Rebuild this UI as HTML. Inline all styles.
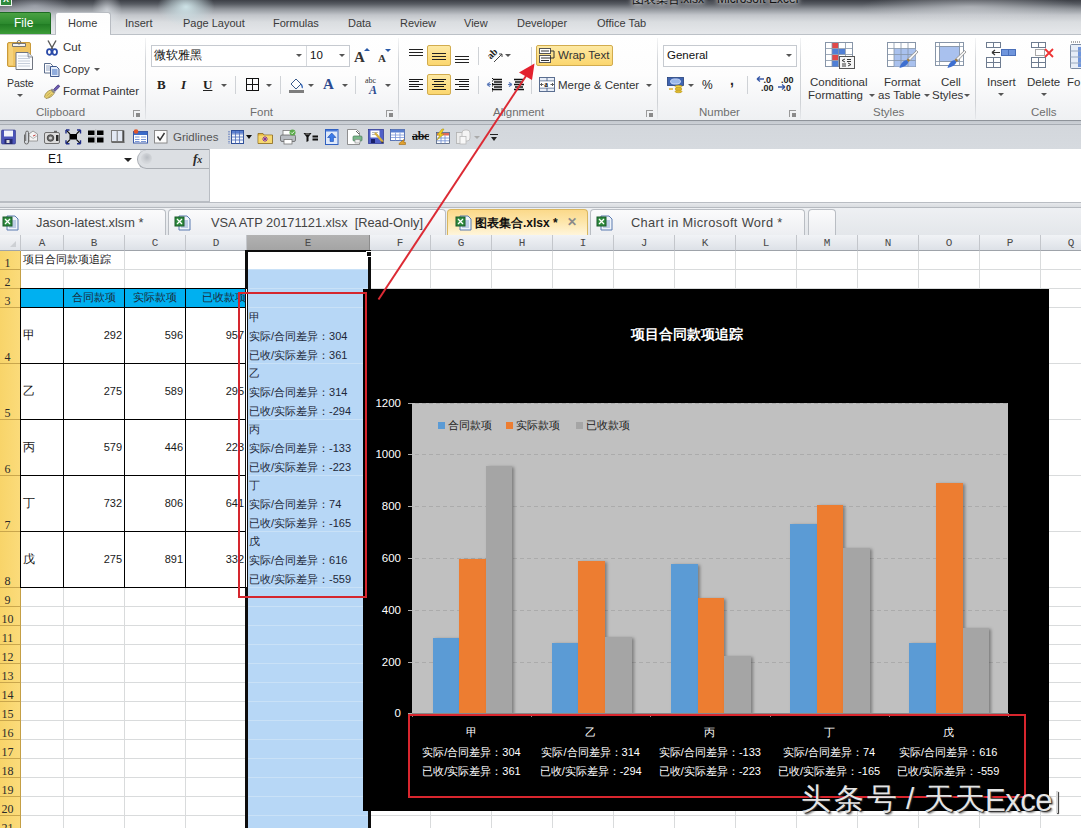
<!DOCTYPE html>
<html><head><meta charset="utf-8"><style>
*{box-sizing:border-box}
html,body{margin:0;padding:0}
body{width:1081px;height:828px;overflow:hidden;position:relative;background:#fff;font-family:"Liberation Sans",sans-serif;color:#222}
.a{position:absolute}
.t{position:absolute;white-space:nowrap;line-height:1}

.rt{position:absolute;top:16px;font-size:11px;color:#3a3a3a;white-space:nowrap;line-height:14px}
.gl{position:absolute;top:106px;font-size:11.5px;color:#6e6e6e;white-space:nowrap;line-height:13px}
.sep{position:absolute;top:38px;width:1px;height:81px;background:linear-gradient(#f4f5f6,#d0d3d7 30%,#cfd2d6 80%,#e6e8eb)}
.rx{position:absolute;font-size:11.5px;color:#333;white-space:nowrap;line-height:13px}
.dd{position:absolute;width:0;height:0;border-left:3px solid transparent;border-right:3px solid transparent;border-top:3px solid #555}
.lnch{position:absolute;top:110px;width:7px;height:7px;border-left:1px solid #9a9a9a;border-top:1px solid #9a9a9a}
.qi{position:absolute;top:128px;width:16px;height:16px}
.gs{position:absolute;width:1px;background:#cfd2d6}
svg{position:absolute;overflow:visible}

.ch{position:absolute;top:235px;height:16px;background:linear-gradient(#f1f3f6,#dde1e7);border-right:1px solid #c3c6cb;border-bottom:1px solid #9ea3aa;font-family:"Liberation Mono",monospace;font-size:11px;color:#4a4a4a;text-align:center;line-height:17px}
.rh{position:absolute;left:0;width:21px;background:linear-gradient(90deg,#f8d469,#fbdb7a);border-bottom:1px solid #c9a64c;border-right:1px solid #c49f45;font-family:"Liberation Serif",serif;font-size:12px;color:#2a2a2a;text-align:center;line-height:13px;padding-right:5px}
.hl{position:absolute;height:1px;background:#d9dbdc}
.vl{position:absolute;width:1px;background:#d9dbdc}
.cn{position:absolute;font-size:11px;color:#1a1a1a;white-space:nowrap;line-height:1}

.yl{position:absolute;width:40px;text-align:right;font-size:11.5px;color:#fff;line-height:12px;white-space:nowrap}
.xl{position:absolute;width:119px;text-align:center;font-size:11px;color:#fff;line-height:12px;white-space:nowrap}
.lg{position:absolute;top:419px;font-size:11px;color:#222;white-space:nowrap;line-height:12px}
</style></head><body>
<div class="a" style="left:0;top:0;width:1081px;height:35px;background:linear-gradient(#3c3f46 0px,#575b62 4px,#8f9399 9px,#c2c5ca 15px,#dadde0 22px,#e6e8eb 34px)"></div>
<div class="a" style="left:158px;top:-12px;width:56px;height:38px;background:radial-gradient(ellipse at center,rgba(210,232,236,.95),rgba(200,220,225,.5) 40%,rgba(200,210,220,0) 72%)"></div>
<div class="a" style="left:92px;top:-10px;width:30px;height:40px;background:radial-gradient(ellipse at center,rgba(235,240,245,.6),rgba(200,210,220,0) 70%)"></div>
<div class="a" style="left:0px;top:-6px;width:70px;height:24px;background:radial-gradient(ellipse at center,rgba(210,215,225,.45),rgba(200,210,220,0) 70%)"></div>
<div class="a" style="left:860px;top:-8px;width:220px;height:30px;background:radial-gradient(ellipse at center,rgba(225,228,232,.5),rgba(200,210,220,0) 70%)"></div>
<div class="a" style="left:0;top:-4px;width:12px;height:10px;background:#2f8a3a;border:1px solid #eef4ee"></div>
<div class="t" style="left:3px;top:-5px;font-size:9px;color:#fff;font-weight:bold">X</div>
<div class="t" style="left:632px;top:-7px;font-size:12px;color:#111;text-shadow:0 0 6px #fff,0 0 4px #fff">图表集合.xlsx</div>
<div class="t" style="left:717px;top:-7px;font-size:12px;color:#111;text-shadow:0 0 6px #fff,0 0 4px #fff">Microsoft Excel</div>
<div class="t" style="left:707px;top:-7px;font-size:12px;color:#111;text-shadow:0 0 6px #fff">-</div>
<div class="a" style="left:0;top:12px;width:51px;height:23px;background:linear-gradient(#4aa243,#2c8a2e 50%,#1f7a22 51%,#3c9c38);border:1px solid #1d6b21;border-left:none;border-radius:0 2px 0 0"></div>
<div class="t" style="left:14px;top:16px;font-size:12px;color:#fff;line-height:14px">File</div>
<div class="a" style="left:55px;top:12px;width:56px;height:24px;background:linear-gradient(#fdfdfd,#ffffff);border:1px solid #b8bcc2;border-bottom:none;border-radius:3px 3px 0 0"></div>
<div class="rt" style="left:68px;color:#3b3b3b">Home</div>
<div class="rt" style="left:125px">Insert</div>
<div class="rt" style="left:183px">Page Layout</div>
<div class="rt" style="left:273px">Formulas</div>
<div class="rt" style="left:348px">Data</div>
<div class="rt" style="left:400px">Review</div>
<div class="rt" style="left:464px">View</div>
<div class="rt" style="left:517px">Developer</div>
<div class="rt" style="left:597px">Office Tab</div>
<div class="a" style="left:0;top:34px;width:1081px;height:86px;background:linear-gradient(#ffffff 0px,#fdfdfd 40px,#f3f4f6 70px,#eef0f2 86px);border-top:1px solid #bcc1c7"></div>
<div class="a" style="left:56px;top:34px;width:54px;height:2px;background:#fff"></div>
<div class="sep" style="left:145px"></div>
<div class="sep" style="left:398px"></div>
<div class="sep" style="left:657px"></div>
<div class="sep" style="left:800px"></div>
<div class="sep" style="left:975px"></div>
<div class="gl" style="left:36px">Clipboard</div>
<div class="gl" style="left:250px">Font</div>
<div class="gl" style="left:493px">Alignment</div>
<div class="gl" style="left:699px">Number</div>
<div class="gl" style="left:873px">Styles</div>
<div class="gl" style="left:1031px">Cells</div>
<div class="lnch" style="left:133px"></div><div class="a" style="left:136px;top:113px;width:4px;height:4px;background:#8a8a8a"></div>
<div class="lnch" style="left:386px"></div><div class="a" style="left:389px;top:113px;width:4px;height:4px;background:#8a8a8a"></div>
<div class="lnch" style="left:646px"></div><div class="a" style="left:649px;top:113px;width:4px;height:4px;background:#8a8a8a"></div>
<div class="lnch" style="left:789px"></div><div class="a" style="left:792px;top:113px;width:4px;height:4px;background:#8a8a8a"></div>
<svg style="left:7px;top:40px" width="27" height="31" viewBox="0 0 27 31"><rect x=".5" y="2.5" width="23" height="24" rx="1.5" fill="#f0c462" stroke="#c99a3a"/><rect x="2" y="4" width="4" height="21" fill="#f6d27a"/><path d="M5.5 3.5h13v3h-13z" fill="#f4f4f4" stroke="#6a6a6a" stroke-width=".9"/><circle cx="12" cy="2.3" r="1.8" fill="none" stroke="#6a6a6a" stroke-width=".9"/><path d="M9 12.5h12l4.5 4.5v12.5H9z" fill="#fbfcfe" stroke="#707580"/><path d="M21 12.5v4.5h4.5" fill="#dde3ea" stroke="#707580" stroke-width=".8"/><path d="M11 16h9M11 18.5h12M11 21h12M11 23.5h12M11 26h12" stroke="#b9c2d0" stroke-width=".8"/></svg>
<div class="rx" style="left:7px;top:77px;font-size:10.6px;letter-spacing:-0.1px">Paste</div>
<div class="dd" style="left:17px;top:94px"></div>
<svg style="left:46px;top:40px" width="12" height="16" viewBox="0 0 12 16"><path d="M2 .5l5 9M10 .5L5 9.5" stroke="#5a5a5a" stroke-width="1.4"/><ellipse cx="3.3" cy="12" rx="2.3" ry="2.8" fill="#fff" stroke="#2a4aa8" stroke-width="1.8"/><ellipse cx="8.7" cy="12" rx="2.3" ry="2.8" fill="#fff" stroke="#2a4aa8" stroke-width="1.8"/></svg>
<div class="rx" style="left:63px;top:41px">Cut</div>
<svg style="left:44px;top:63px" width="16" height="14" viewBox="0 0 16 14"><path d="M.5 .5h6l2 2v7.5H.5z" fill="#fdfdfe" stroke="#4a5d80" stroke-width=".9"/><path d="M2 3h4M2 5h5M2 7h5" stroke="#7a90b8" stroke-width=".8"/><path d="M6.5 3.5h6l2.5 2.5v7.5H6.5z" fill="#e6eefa" stroke="#2a4680" stroke-width=".9"/><path d="M8 7h5.5M8 9h5.5M8 11h5.5" stroke="#3a6ac0" stroke-width="1"/></svg>
<div class="rx" style="left:63px;top:63px">Copy</div>
<div class="dd" style="left:94px;top:68px"></div>
<svg style="left:44px;top:84px" width="16" height="15" viewBox="0 0 16 15"><path d="M9.5 5.5l4-4.2a1.3 1.3 0 0 1 1.8 1.8l-4.2 4z" fill="#6a5ab0" stroke="#3a2a70" stroke-width=".7"/><path d="M8 4.5l3.5 3.5-1.5 1.5-3.5-3.5z" fill="#8a8a8a"/><path d="M6.5 6l3.5 3.5c-1.5 2.5-4 4.5-8 5-.5-.5-.8-.8-1.5-1.5.5-4 3.5-6 6-7z" fill="#e8d070" stroke="#8a7a3a" stroke-width=".7"/><path d="M2.5 12l4-3.5M4 13.5l4-3.5" stroke="#a89040" stroke-width=".6"/></svg>
<div class="rx" style="left:63px;top:85px">Format Painter</div>
<div class="a" style="left:151px;top:45px;width:199px;height:22px;background:#fff;border:1px solid #c6cad0"></div>
<div class="a" style="left:306px;top:46px;width:1px;height:20px;background:#d5d8dc"></div>
<div class="t" style="left:154px;top:49px;font-size:12px;color:#111">微软雅黑</div>
<div class="dd" style="left:296px;top:54px"></div>
<div class="t" style="left:310px;top:50px;font-size:11.5px;color:#111">10</div>
<div class="dd" style="left:339px;top:54px"></div>
<div class="t" style="left:354px;top:50px;font-size:15px;color:#333;font-family:'Liberation Serif',serif;font-weight:bold">A</div>
<div class="t" style="left:378px;top:53px;font-size:11px;color:#333;font-family:'Liberation Serif',serif;font-weight:bold">A</div>
<div class="a" style="left:364px;top:48px;width:0;height:0;border-left:3px solid transparent;border-right:3px solid transparent;border-bottom:3px solid #2a5aa8"></div>
<div class="a" style="left:385px;top:49px;width:0;height:0;border-left:3px solid transparent;border-right:3px solid transparent;border-top:3px solid #2a5aa8"></div>
<div class="t" style="left:157px;top:78px;font-size:13px;color:#222;font-family:'Liberation Serif',serif;font-weight:bold">B</div>
<div class="t" style="left:181px;top:78px;font-size:13px;color:#222;font-family:'Liberation Serif',serif;font-style:italic;font-weight:bold">I</div>
<div class="t" style="left:203px;top:78px;font-size:13px;color:#222;font-family:'Liberation Serif',serif;font-weight:bold;text-decoration:underline">U</div>
<div class="dd" style="left:221px;top:84px"></div>
<div class="gs" style="left:235px;top:76px;height:18px"></div>
<svg style="left:246px;top:78px" width="13" height="13" viewBox="0 0 13 13"><rect x=".5" y=".5" width="12" height="12" fill="none" stroke="#111"/><path d="M6.5 0v13M0 6.5h13" stroke="#111"/></svg>
<div class="dd" style="left:266px;top:84px"></div>
<div class="gs" style="left:280px;top:76px;height:18px"></div>
<svg style="left:288px;top:76px" width="17" height="17" viewBox="0 0 17 17"><path d="M3 8l5-5 5 5-5 5z" fill="#fff" stroke="#3a5a8a"/><path d="M13 8c1 2 2 3 1 4" stroke="#3a6ab8" stroke-width="1.5" fill="none"/><rect x="1" y="14" width="15" height="3" fill="#7d7d7d"/></svg>
<div class="dd" style="left:308px;top:84px"></div>
<div class="t" style="left:323px;top:77px;font-size:15px;color:#2b4b8f;font-family:'Liberation Serif',serif;font-weight:bold">A</div>
<div class="dd" style="left:342px;top:84px"></div>
<div class="gs" style="left:355px;top:76px;height:18px"></div>
<div class="t" style="left:365px;top:77px;font-size:8px;color:#333;font-family:'Liberation Serif',serif">abc</div>
<div class="t" style="left:369px;top:84px;font-size:12px;color:#2b4b8f;font-family:'Liberation Serif',serif;font-style:italic;font-weight:bold">A</div>
<div class="dd" style="left:385px;top:84px"></div>
<div class="a" style="left:427px;top:45px;width:24px;height:21px;background:linear-gradient(#fde9a4,#fbd66e);border:1px solid #d2ac4e;border-radius:2px"></div>
<div class="a" style="left:427px;top:74px;width:24px;height:21px;background:linear-gradient(#fde9a4,#fbd66e);border:1px solid #d2ac4e;border-radius:2px"></div>
<div class="a" style="left:409px;top:49px;width:14px;height:1px;background:#222"></div><div class="a" style="left:409px;top:52px;width:14px;height:1px;background:#222"></div><div class="a" style="left:409px;top:55px;width:14px;height:1px;background:#222"></div>
<div class="a" style="left:432px;top:53px;width:14px;height:1px;background:#222"></div><div class="a" style="left:432px;top:56px;width:14px;height:1px;background:#222"></div><div class="a" style="left:432px;top:59px;width:14px;height:1px;background:#222"></div>
<div class="a" style="left:455px;top:56px;width:14px;height:1px;background:#222"></div><div class="a" style="left:455px;top:59px;width:14px;height:1px;background:#222"></div><div class="a" style="left:455px;top:62px;width:14px;height:1px;background:#222"></div>
<div class="a" style="left:409px;top:79px;width:14px;height:1px;background:#1a1a1a"></div>
<div class="a" style="left:432px;top:79px;width:14px;height:1px;background:#1a1a1a"></div>
<div class="a" style="left:455px;top:79px;width:14px;height:1px;background:#1a1a1a"></div>
<div class="a" style="left:409px;top:81px;width:10px;height:1px;background:#1a1a1a"></div>
<div class="a" style="left:434px;top:81px;width:10px;height:1px;background:#1a1a1a"></div>
<div class="a" style="left:459px;top:81px;width:10px;height:1px;background:#1a1a1a"></div>
<div class="a" style="left:409px;top:84px;width:14px;height:1px;background:#1a1a1a"></div>
<div class="a" style="left:432px;top:84px;width:14px;height:1px;background:#1a1a1a"></div>
<div class="a" style="left:455px;top:84px;width:14px;height:1px;background:#1a1a1a"></div>
<div class="a" style="left:409px;top:86px;width:10px;height:1px;background:#1a1a1a"></div>
<div class="a" style="left:434px;top:86px;width:10px;height:1px;background:#1a1a1a"></div>
<div class="a" style="left:459px;top:86px;width:10px;height:1px;background:#1a1a1a"></div>
<div class="a" style="left:409px;top:89px;width:14px;height:1px;background:#1a1a1a"></div>
<div class="a" style="left:432px;top:89px;width:14px;height:1px;background:#1a1a1a"></div>
<div class="a" style="left:455px;top:89px;width:14px;height:1px;background:#1a1a1a"></div>
<div class="gs" style="left:478px;top:47px;height:18px"></div><div class="gs" style="left:478px;top:76px;height:18px"></div>
<div class="t" style="left:487px;top:49px;font-size:10px;color:#222;font-family:'Liberation Serif',serif;font-weight:bold;transform:rotate(-45deg)">ab</div>
<svg style="left:493px;top:53px" width="10" height="10" viewBox="0 0 10 10"><path d="M1 9L9 1M6 1h3v3" stroke="#444" fill="none"/></svg>
<div class="dd" style="left:505px;top:54px"></div>
<svg style="left:487px;top:78px" width="40" height="14" viewBox="0 0 40 14"><path d="M0 6.5h4M0 6.5l3-2M0 6.5l3 2" stroke="#5a78b8" stroke-width="1.2" fill="none"/><path d="M6 1.5h9M7 4h8M5 6.5h10M7 9h8M5 11.5h10" stroke="#111" stroke-width="1.3"/><path d="M5.5 0v14" stroke="#111" stroke-dasharray="1 1.5"/><path d="M21 6.5h4M25 6.5l-3-2M25 6.5l-3 2" stroke="#5a78b8" stroke-width="1.2" fill="none"/><path d="M27 1.5h9M28 4h8M27 6.5h10M28 9h8M27 11.5h10" stroke="#111" stroke-width="1.3"/></svg>
<div class="gs" style="left:531px;top:47px;height:18px"></div><div class="gs" style="left:531px;top:76px;height:18px"></div>
<div class="a" style="left:536px;top:45px;width:77px;height:21px;background:linear-gradient(#fde9a4,#fbd66e);border:1px solid #d2ac4e;border-radius:2px"></div>
<svg style="left:539px;top:48px" width="17" height="16" viewBox="0 0 17 16"><rect x=".5" y=".5" width="11" height="5" fill="#fff" stroke="#555"/><path d="M2 3h8" stroke="#333"/><rect x=".5" y="7.5" width="11" height="7" fill="#fff" stroke="#555"/><path d="M2 10h8M2 12.5h8" stroke="#333"/><path d="M11 3h4v7h-3" stroke="#333" fill="none"/><path d="M12 8v4l-2-2z" fill="#333"/></svg>
<div class="rx" style="left:558px;top:49px;color:#333">Wrap Text</div>
<svg style="left:539px;top:77px" width="17" height="15" viewBox="0 0 17 15"><rect x=".5" y=".5" width="15" height="14" fill="#e8eef8" stroke="#5a6e90"/><path d="M.5 4h15M.5 11h15M8 .5v3.5M8 11v3.5" stroke="#5a6e90"/><rect x="1" y="4.5" width="14" height="6" fill="#fff"/><path d="M1.5 7.5h3M1.5 7.5l1.5-1.5M1.5 7.5l1.5 1.5M14.5 7.5h-3M14.5 7.5l-1.5-1.5M14.5 7.5l-1.5 1.5" stroke="#333" stroke-width=".8" fill="none"/><text x="5.3" y="10" font-size="7.5" font-weight="bold" font-family="Liberation Serif" fill="#111">a</text></svg>
<div class="rx" style="left:558px;top:79px">Merge &amp; Center</div>
<div class="dd" style="left:646px;top:84px"></div>
<div class="a" style="left:663px;top:45px;width:134px;height:22px;background:#fff;border:1px solid #c6cad0"></div>
<div class="t" style="left:667px;top:50px;font-size:11.5px;color:#111">General</div>
<div class="dd" style="left:786px;top:54px"></div>
<svg style="left:667px;top:77px" width="17" height="16" viewBox="0 0 17 16"><rect x=".5" y=".5" width="16" height="8" fill="#3f64b0" stroke="#23407a" stroke-width=".8"/><ellipse cx="8.5" cy="4.5" rx="5" ry="2.6" fill="#9ab8ea" stroke="#dfe8ff" stroke-width=".8"/><ellipse cx="11.5" cy="9.5" rx="3.5" ry="1.3" fill="#f0cf40" stroke="#a88a10" stroke-width=".5"/><ellipse cx="11.5" cy="12" rx="3.5" ry="1.3" fill="#e8c030" stroke="#a88a10" stroke-width=".5"/><ellipse cx="11.5" cy="14.5" rx="3.5" ry="1.3" fill="#e0b828" stroke="#a88a10" stroke-width=".5"/><path d="M2 12h4" stroke="#e0b030" stroke-width="1.5"/></svg>
<div class="dd" style="left:688px;top:84px"></div>
<div class="t" style="left:702px;top:79px;font-size:12px;color:#222">%</div>
<div class="t" style="left:730px;top:73px;font-size:14px;color:#222;font-weight:bold">,</div>
<div class="gs" style="left:747px;top:76px;height:18px"></div>
<div class="t" style="left:761px;top:76px;font-size:9px;color:#222;font-weight:bold;line-height:8px">&nbsp;.0<br>.00</div>
<svg style="left:756px;top:76px" width="8" height="6" viewBox="0 0 8 6"><path d="M1 3h7M1 3l3-2.5M1 3l3 2.5" stroke="#3a5aa8" stroke-width="1.3" fill="none"/></svg>
<div class="t" style="left:781px;top:76px;font-size:9px;color:#222;font-weight:bold;line-height:8px">.00<br>&nbsp;.0</div>
<svg style="left:778px;top:84px" width="8" height="6" viewBox="0 0 8 6"><path d="M0 3h7M7 3L4 .5M7 3L4 5.5" stroke="#3a5aa8" stroke-width="1.3" fill="none"/></svg>
<svg style="left:825px;top:42px" width="31" height="28" viewBox="0 0 31 28"><rect x=".5" y=".5" width="27" height="24" fill="#fff" stroke="#8795a8"/><rect x="7" y="1" width="6.5" height="5.5" fill="#e04848"/><rect x="7" y="7" width="13" height="5.5" fill="#4f7fd6"/><rect x="7" y="13" width="6.5" height="5.5" fill="#e04848"/><rect x="7" y="19" width="6.5" height="5.5" fill="#4f7fd6"/><path d="M7 .5v24M13.5 .5v24M20.5 .5v24M.5 6.5h27M.5 12.5h27M.5 18.5h27" stroke="#8795a8" stroke-width=".8"/><rect x="14.5" y="14.5" width="15" height="12" fill="#f6f6f6" stroke="#555"/><path d="M20 17l-3 1.5 3 1.5M22 17.5h4M22 19.5h4M17 22h4M17 24h4M23 21l3 1.5-3 1.5" stroke="#222" fill="none" stroke-width=".9"/></svg>
<svg style="left:887px;top:42px" width="31" height="28" viewBox="0 0 31 28"><rect x=".5" y=".5" width="28" height="24" fill="#fff" stroke="#8795a8"/><rect x="7" y="6.5" width="21.5" height="18" fill="#a9c1ee"/><path d="M7 .5v24M14 .5v24M21 .5v24M.5 6.5h28M.5 12.5h28M.5 18.5h28" stroke="#8795a8" stroke-width=".8"/><g transform="translate(8.5,7)"><path d="M21 1.5l1.5 1.5-8 8.5-2-2z" fill="#f4f4f4" stroke="#8a8a8a" stroke-width=".8"/><path d="M12.5 9.5l2 2-1.5 1.5-2-2z" fill="#a07a3a"/><path d="M11 11l2 2c-1 3-4 5-9 6 1-4 3-7 7-8z" fill="#3d6fd0"/></g></svg>
<svg style="left:935px;top:42px" width="31" height="28" viewBox="0 0 31 28"><rect x=".5" y=".5" width="28" height="23" fill="#fff" stroke="#8795a8"/><rect x="4.5" y="4.5" width="20" height="15" fill="#a9c1ee" stroke="#8795a8" stroke-width=".8"/><path d="M4.5 .5v23M24.5 .5v23M.5 4.5h28M.5 19.5h28" stroke="#8795a8" stroke-width=".8"/><g transform="translate(8.5,7)"><path d="M21 1.5l1.5 1.5-8 8.5-2-2z" fill="#f4f4f4" stroke="#8a8a8a" stroke-width=".8"/><path d="M12.5 9.5l2 2-1.5 1.5-2-2z" fill="#a07a3a"/><path d="M11 11l2 2c-1 3-4 5-9 6 1-4 3-7 7-8z" fill="#3d6fd0"/></g></svg>
<div class="rx" style="left:810px;top:76px">Conditional</div>
<div class="rx" style="left:808px;top:89px">Formatting</div><div class="dd" style="left:869px;top:94px"></div>
<div class="rx" style="left:884px;top:76px">Format</div>
<div class="rx" style="left:878px;top:89px">as Table</div><div class="dd" style="left:924px;top:94px"></div>
<div class="rx" style="left:941px;top:76px">Cell</div>
<div class="rx" style="left:932px;top:89px">Styles</div><div class="dd" style="left:964px;top:94px"></div>
<svg style="left:986px;top:42px" width="31" height="27" viewBox="0 0 31 27"><g fill="#fff" stroke="#6e7c90"><rect x=".5" y=".5" width="14" height="5"/><path d="M7.5 .5v5"/><rect x=".5" y="15.5" width="14" height="10"/><path d="M7.5 15.5v10M.5 20.5h14"/></g><rect x="15.5" y="7.5" width="14" height="6" fill="#6f95dc" stroke="#4a6fb8"/><path d="M22.5 7.5v6" stroke="#4a6fb8"/><path d="M6 10.5h8M6 10.5l3-2.5M6 10.5l3 2.5" stroke="#333" stroke-width="1.2" fill="none"/></svg>
<svg style="left:1031px;top:42px" width="25" height="27" viewBox="0 0 25 27"><g fill="#fff" stroke="#6e7c90"><rect x=".5" y=".5" width="14" height="5"/><path d="M7.5 .5v5"/><rect x=".5" y="15.5" width="14" height="10"/><path d="M7.5 15.5v10M.5 20.5h14"/></g><rect x="4.5" y="7.5" width="9" height="6" fill="none" stroke="#555" stroke-dasharray="1 1"/><path d="M14 7l8 8M22 7l-8 8" stroke="#e33" stroke-width="1.8"/></svg>
<svg style="left:1070px;top:41px" width="12" height="29" viewBox="0 0 12 29"><rect x=".5" y="3.5" width="12" height="24" rx="1" fill="#e6edf7" stroke="#7b8ba3"/><rect x="8" y="6" width="4" height="20" fill="#6f95dc"/><path d="M.5 10h12M.5 16h12M.5 22h12" stroke="#9aaac0"/><path d="M1 1h10" stroke="#555" stroke-dasharray="1 1"/></svg>
<div class="rx" style="left:987px;top:76px">Insert</div><div class="dd" style="left:998px;top:93px"></div>
<div class="rx" style="left:1027px;top:76px">Delete</div><div class="dd" style="left:1041px;top:93px"></div>
<div class="rx" style="left:1067px;top:76px">Fo</div>
<div class="a" style="left:0;top:120px;width:1081px;height:29px;background:linear-gradient(#8e939a 0px,#8e939a 1px,#c3c8ce 1px,#cdd1d7 4px,#a7acb3 4px,#a7acb3 5px,#d3d7dc 5px,#d6dadf 100%)"></div>
<svg style="left:1px;top:129px" width="17" height="16" viewBox="0 0 17 16"><rect x=".5" y="1" width="14" height="14" rx="1" fill="#4b54b8" stroke="#2e3488" stroke-width=".6"/><rect x="3" y="1.5" width="9" height="6" fill="#f2f4fa"/><rect x="3.5" y="10" width="8" height="5" fill="#262a70"/><rect x="5.5" y="11" width="3" height="3" fill="#ddd"/></svg>
<svg style="left:22px;top:129px" width="17" height="16" viewBox="0 0 17 16"><path d="M7 5l4-3 4.5 3v7H7z" fill="#f4f4f4" stroke="#888" stroke-width=".8"/><path d="M7 6.5l4.2 3L15.5 6.5" stroke="#999" fill="none" stroke-width=".7"/><path d="M11 7l2.5-1" stroke="#c03030" stroke-width=".9"/><path d="M2.5 5.5v7.5a2 2 0 0 0 4 0V3.5a1.4 1.4 0 0 0-2.8 0V12" stroke="#6a6a6a" fill="none" stroke-width="1"/></svg>
<svg style="left:44px;top:129px" width="17" height="16" viewBox="0 0 17 16"><rect x=".5" y="3.5" width="15" height="11" rx="1.5" fill="#dcdcdc" stroke="#707070"/><circle cx="6.5" cy="9" r="3.3" fill="#6a6a6a" stroke="#3a3a3a" stroke-width=".8"/><circle cx="6.5" cy="9" r="1.6" fill="#cfcfcf"/><rect x="12" y="6" width="2.5" height="6" fill="#2a2a2a"/><rect x="10" y="1.8" width="3" height="2" fill="#666"/></svg>
<svg style="left:65px;top:129px" width="17" height="16" viewBox="0 0 17 16"><rect x="4.5" y="5" width="7.5" height="5.5" fill="#000"/><path d="M1.2 1.2l3.8 3.8M15.3 1.2l-3.8 3.8M1.2 14.5l3.8-3.8M15.3 14.5l-3.8-3.8" stroke="#111" stroke-width="1.2"/><path d="M1 1h3.5M1 1v3.5M15.5 1H12M15.5 1v3.5M1 14.7h3.5M1 14.7v-3.5M15.5 14.7H12M15.5 14.7v-3.5" stroke="#1c2a86" stroke-width="1.4"/></svg>
<svg style="left:88px;top:129px" width="17" height="16" viewBox="0 0 17 16"><rect x="0" y="1.5" width="6.5" height="4.5" fill="#000"/><rect x="9" y="1.5" width="6.5" height="4.5" fill="#000"/><rect x="0" y="8.5" width="6.5" height="5" fill="#000"/><rect x="9" y="8.5" width="6.5" height="5" fill="#000"/><path d="M7.75 0v15M0 7.3h15.5" stroke="#aaa" stroke-width=".6"/></svg>
<svg style="left:111px;top:129px" width="17" height="16" viewBox="0 0 17 16"><rect x=".5" y="1.5" width="11.5" height="11" fill="#e3e9f4" stroke="#7a7a7a"/><path d="M6.2 1.5v11" stroke="#7a7a7a"/><rect x="11.5" y="1.5" width="1.8" height="12.5" fill="#4a4a4a"/><rect x=".5" y="12.5" width="12.8" height="1.5" fill="#6a6a6a"/></svg>
<svg style="left:133px;top:129px" width="17" height="16" viewBox="0 0 17 16"><rect x=".5" y="2.5" width="14" height="11.5" fill="#fff" stroke="#3a5aa8"/><rect x="1" y="3" width="13" height="3" fill="#3a6ac8"/><path d="M2 8h4.5M8 8h5M2 10.5h4.5M8 10.5h5M2 12.5h4.5M8 12.5h5" stroke="#6a8ad0" stroke-width=".9"/><circle cx="3" cy="2.5" r="2.3" fill="#e0552a"/></svg>
<svg style="left:154px;top:129px" width="17" height="16" viewBox="0 0 17 16"><rect x=".5" y="1.5" width="12.5" height="12.5" fill="#fbfbfb" stroke="#8a8a8a"/><path d="M3.5 7.5l2.5 3.5 4.5-7" stroke="#333" fill="none" stroke-width="1.4"/></svg>
<div class="t" style="left:173px;top:132px;font-size:11.5px;color:#555">Gridlines</div>
<svg style="left:228px;top:129px" width="17" height="16" viewBox="0 0 17 16"><rect x="3.5" y="1.5" width="12" height="13" fill="#f4f7fc" stroke="#2f4f98"/><rect x="4" y="2" width="11" height="2.5" fill="#5a7fd0"/><path d="M3.5 5h12M3.5 8h12M3.5 11h12M7.5 2v12.5M11.5 2v12.5" stroke="#4a6ab8" stroke-width=".8"/><path d="M1 2v13" stroke="#4a6ab8" stroke-dasharray="1.5 1"/></svg>
<svg style="left:257px;top:129px" width="17" height="16" viewBox="0 0 17 16"><path d="M1 4.5h5l1 1.5h8.5v8.5H1z" fill="#e6b840" stroke="#8a6a20" stroke-width=".8"/><rect x="1.5" y="6.5" width="13.5" height="7.5" fill="#f6d870"/><path d="M8 7v6M5 10h6M6 8l4 4M10 8l-4 4" stroke="#7a2aa8" stroke-width=".9"/></svg>
<svg style="left:280px;top:129px" width="17" height="16" viewBox="0 0 17 16"><rect x="3" y="1.5" width="8" height="5" fill="#fff" stroke="#777" stroke-width=".8"/><rect x=".5" y="6" width="15" height="6.5" rx="1.5" fill="#b8bcc2" stroke="#666" stroke-width=".8"/><rect x="4" y="10.5" width="8" height="4.5" fill="#fff" stroke="#777" stroke-width=".8"/><circle cx="12.5" cy="3.5" r="3" fill="#5aaa4a"/><path d="M11 3.5l1.2 1.2 2-2.2" stroke="#fff" fill="none" stroke-width=".9"/></svg>
<svg style="left:303px;top:129px" width="17" height="16" viewBox="0 0 17 16"><path d="M.5 4h8l-3 4v4l-2 1V8z" fill="#111"/><path d="M2.5 5h4" stroke="#fff" stroke-width=".6"/><path d="M9.5 7.5h5.5M9.5 10.5h5.5" stroke="#111" stroke-width="1.8"/></svg>
<svg style="left:325px;top:129px" width="17" height="16" viewBox="0 0 17 16"><rect x=".5" y=".5" width="12.5" height="15" fill="#dfe9fa" stroke="#3060c0"/><rect x="1" y="1" width="11.5" height="1.5" fill="#4a7ad8"/><path d="M6.75 4l-4.2 4.5h2.5v4h3.4v-4h2.5z" fill="#3a7ae8" stroke="#1a4ab0" stroke-width=".6"/></svg>
<svg style="left:347px;top:129px" width="17" height="16" viewBox="0 0 17 16"><path d="M.5 .5h9l3 3v12H.5z" fill="#fff" stroke="#777" stroke-width=".8"/><rect x="6" y="7" width="9" height="5" rx="1" fill="#7ab88a" stroke="#4a7a5a" stroke-width=".7"/><rect x="8" y="10.5" width="5" height="3.5" fill="#eee" stroke="#888" stroke-width=".6"/><path d="M9 2l3 3" stroke="#333" stroke-width=".8"/></svg>
<svg style="left:368px;top:129px" width="17" height="16" viewBox="0 0 17 16"><rect x=".5" y=".5" width="15" height="14" fill="#5060c8" stroke="#2a3490" stroke-width=".7"/><rect x="2.5" y="1.5" width="9" height="7" fill="#fff"/><path d="M4 3.5h6M4 5.5h6" stroke="#999" stroke-width=".7"/><rect x="3" y="10" width="4" height="4" fill="#1a206a"/><path d="M7 4l8 9" stroke="#d8b040" stroke-width="2.2"/><path d="M14 12l1.5 2.5-2.5-1z" fill="#333"/></svg>
<svg style="left:390px;top:129px" width="17" height="16" viewBox="0 0 17 16"><rect x=".5" y=".5" width="14" height="11" fill="#fff" stroke="#3a5aa8" stroke-width=".8"/><rect x="1" y="1" width="13" height="2.5" fill="#5a7fd0"/><path d="M1 6h13M1 8.5h13M5.5 3.5v8M10 3.5v8" stroke="#7a96d8" stroke-width=".8"/><path d="M9 14.5l5-4v3h1.5v2H9z" fill="#e0a030" stroke="#a06a10" stroke-width=".6"/></svg>
<svg style="left:434px;top:129px" width="17" height="16" viewBox="0 0 17 16"><rect x="2.5" y="3.5" width="13" height="11" fill="#fff" stroke="#4a5a7a" stroke-width=".8"/><rect x="3" y="4" width="12" height="2.5" fill="#e06a5a"/><path d="M3 9h12M3 11.8h12M7 6.5v8M11 6.5v8" stroke="#6a8ad0" stroke-width=".8"/><path d="M8 0L3 6h3l-3 5 7-6H7l3-5z" fill="#f0d020" stroke="#a08a10" stroke-width=".5"/></svg>
<svg style="left:456px;top:129px" width="17" height="16" viewBox="0 0 17 16"><rect x=".5" y="3.5" width="8" height="11" fill="#ececec" stroke="#b0b0b0" stroke-width=".8"/><rect x="6" y="1" width="8" height="11" rx="3" fill="#f4f4f4" stroke="#b8b8b8" stroke-width=".8"/><rect x="4" y="7.5" width="6" height="7.5" fill="#f8f8f8" stroke="#b8b8b8" stroke-width=".8"/></svg>
<div class="dd" style="left:246px;top:135px;border-left-width:3.5px;border-right-width:3.5px;border-top-width:4px;border-top-color:#111"></div>
<div class="t" style="left:412px;top:130px;font-size:12px;color:#1a1a1a;font-weight:bold;font-family:'Liberation Serif',serif;letter-spacing:-0.3px">abc</div><div class="a" style="left:412px;top:136px;width:17px;height:1.3px;background:#111"></div>
<div class="dd" style="left:474px;top:136px;border-top-color:#aaa"></div>
<div class="a" style="left:490px;top:134px;width:8px;height:1px;background:#222"></div><div class="dd" style="left:491px;top:137px;border-top-color:#222;border-left-width:3.5px;border-right-width:3.5px;border-top-width:4px"></div>
<div class="a" style="left:0;top:149px;width:1081px;height:59px;background:#dfe2e6"></div>
<div class="a" style="left:0;top:149px;width:140px;height:20px;background:#fff;border-bottom:1px solid #c3c7cc"></div>
<div class="t" style="left:48px;top:153px;font-size:12px;color:#111">E1</div>
<div class="dd" style="left:124px;top:158px;border-left-width:4px;border-right-width:4px;border-top-width:4px;border-top-color:#222"></div>
<div class="a" style="left:137px;top:150px;width:73px;height:19px;background:#dcdfe3;border:1px solid #a9adb3;border-right:none;border-top:none;border-radius:10px 0 0 10px"></div>
<div class="a" style="left:141px;top:153px;width:11px;height:11px;border-radius:50%;background:radial-gradient(circle at 55% 40%,#b9bdc3,#d3d6da 55%,#dcdfe3)"></div>
<div class="a" style="left:0;top:149px;width:1081px;height:1px;background:#979ca3"></div>
<div class="t" style="left:193px;top:152px;font-size:13px;color:#2a2a2a;font-family:'Liberation Serif',serif;font-style:italic;font-weight:bold">f<span style="font-size:10px">x</span></div>
<div class="a" style="left:209px;top:149px;width:872px;height:54px;background:#fff;border-left:1px solid #b9bdc3;border-bottom:1px solid #b9bdc3"></div>
<div class="a" style="left:0;top:201px;width:210px;height:2px;background:#b9bdc3"></div>
<div class="a" style="left:0;top:203px;width:1081px;height:5px;background:linear-gradient(#e6e8eb,#d7dade)"></div>
<div class="a" style="left:0;top:207px;width:1081px;height:29px;background:linear-gradient(#eef0f3,#e3e6ea);border-top:1px solid #b6bac0"></div>
<div class="a" style="left:-4px;top:209px;width:170px;height:27px;background:linear-gradient(#fbfbfc,#eceef1);border:1px solid #b9bdc3;border-bottom:none;border-radius:4px 4px 0 0"></div>
<div class="a" style="left:168px;top:209px;width:278px;height:27px;background:linear-gradient(#fbfbfc,#eceef1);border:1px solid #b9bdc3;border-bottom:none;border-radius:4px 4px 0 0"></div>
<div class="a" style="left:447px;top:209px;width:141px;height:27px;background:linear-gradient(#fbd98a,#fde6aa 45%,#fff6de);border:1px solid #d9b760;border-bottom:none;border-radius:4px 4px 0 0"></div>
<div class="a" style="left:590px;top:209px;width:215px;height:27px;background:linear-gradient(#fbfbfc,#eceef1);border:1px solid #b9bdc3;border-bottom:none;border-radius:4px 4px 0 0"></div>
<div class="a" style="left:808px;top:209px;width:28px;height:27px;background:linear-gradient(#fbfbfc,#eceef1);border:1px solid #b9bdc3;border-bottom:none;border-radius:4px 4px 0 0"></div>
<svg style="left:2px;top:214px" width="17" height="17" viewBox="0 0 17 17"><path d="M5 2h8l3 3v11H5z" fill="#eef3fa" stroke="#5a7ab0"/><path d="M7 7h7M7 9h7M7 11h7M7 13h7" stroke="#8aa6d0"/><rect x="1" y="3" width="9" height="9" fill="#2e8b3e" stroke="#1a5a2a"/><path d="M3 5l5 5M8 5l-5 5" stroke="#fff" stroke-width="1.3"/></svg>
<svg style="left:174px;top:214px" width="17" height="17" viewBox="0 0 17 17"><path d="M5 2h8l3 3v11H5z" fill="#eef3fa" stroke="#5a7ab0"/><path d="M7 7h7M7 9h7M7 11h7M7 13h7" stroke="#8aa6d0"/><rect x="1" y="3" width="9" height="9" fill="#2e8b3e" stroke="#1a5a2a"/><path d="M3 5l5 5M8 5l-5 5" stroke="#fff" stroke-width="1.3"/></svg>
<svg style="left:455px;top:214px" width="17" height="17" viewBox="0 0 17 17"><path d="M5 2h8l3 3v11H5z" fill="#eef3fa" stroke="#5a7ab0"/><path d="M7 7h7M7 9h7M7 11h7M7 13h7" stroke="#8aa6d0"/><rect x="1" y="3" width="9" height="9" fill="#2e8b3e" stroke="#1a5a2a"/><path d="M3 5l5 5M8 5l-5 5" stroke="#fff" stroke-width="1.3"/></svg>
<svg style="left:596px;top:214px" width="17" height="17" viewBox="0 0 17 17"><path d="M5 2h8l3 3v11H5z" fill="#eef3fa" stroke="#5a7ab0"/><path d="M7 7h7M7 9h7M7 11h7M7 13h7" stroke="#8aa6d0"/><rect x="1" y="3" width="9" height="9" fill="#2e8b3e" stroke="#1a5a2a"/><path d="M3 5l5 5M8 5l-5 5" stroke="#fff" stroke-width="1.3"/></svg>
<div class="t" style="left:36px;top:217px;font-size:12.8px;color:#444">Jason-latest.xlsm *</div>
<div class="t" style="left:211px;top:217px;font-size:12.8px;color:#444">VSA ATP 20171121.xlsx &nbsp;[Read-Only]</div>
<div class="t" style="left:475px;top:217px;font-size:12px;color:#111;font-weight:bold">图表集合.xlsx *</div>
<div class="t" style="left:567px;top:216px;font-size:12px;color:#8a8a8a;font-weight:bold">✕</div>
<div class="t" style="left:631px;top:217px;font-size:12.8px;letter-spacing:0.36px;color:#444">Chart in Microsoft Word *</div>
<div class="a" style="left:0;top:235px;width:1081px;height:1px;background:#9aa0a7"></div>
<div class="a" style="left:0;top:251px;width:1081px;height:577px;background:#fff"></div>
<div class="a" style="left:0;top:235px;width:21px;height:16px;background:linear-gradient(#f3f4f6,#e1e4e9);border-right:1px solid #c3c6cb;border-bottom:1px solid #9ea3aa"></div>
<div class="a" style="left:10px;top:241px;width:0;height:0;border-left:6px solid transparent;border-bottom:6px solid #cdd0d4"></div>
<div class="ch" style="left:21px;width:43px;">A</div>
<div class="ch" style="left:64px;width:61px;">B</div>
<div class="ch" style="left:125px;width:61px;">C</div>
<div class="ch" style="left:186px;width:61px;">D</div>
<div class="ch" style="left:247px;width:123px;background:linear-gradient(#b2b2b2,#a4a4a4);border-right:1px solid #8c8c8c;">E</div>
<div class="ch" style="left:370px;width:61px;">F</div>
<div class="ch" style="left:431px;width:61px;">G</div>
<div class="ch" style="left:492px;width:61px;">H</div>
<div class="ch" style="left:553px;width:61px;">I</div>
<div class="ch" style="left:614px;width:61px;">J</div>
<div class="ch" style="left:675px;width:61px;">K</div>
<div class="ch" style="left:736px;width:61px;">L</div>
<div class="ch" style="left:797px;width:61px;">M</div>
<div class="ch" style="left:858px;width:61px;">N</div>
<div class="ch" style="left:919px;width:61px;">O</div>
<div class="ch" style="left:980px;width:61px;">P</div>
<div class="ch" style="left:1041px;width:61px;">Q</div>
<div class="a" style="left:247px;top:269px;width:122px;height:560px;background:#b7d7f6"></div>
<div class="hl" style="left:21px;top:269px;width:225px"></div>
<div class="hl" style="left:369px;top:269px;width:712px"></div>
<div class="hl" style="left:247px;top:269px;width:122px;background:#c9e1f7"></div>
<div class="hl" style="left:21px;top:288px;width:225px"></div>
<div class="hl" style="left:369px;top:288px;width:712px"></div>
<div class="hl" style="left:247px;top:288px;width:122px;background:#c9e1f7"></div>
<div class="hl" style="left:21px;top:307px;width:225px"></div>
<div class="hl" style="left:369px;top:307px;width:712px"></div>
<div class="hl" style="left:247px;top:307px;width:122px;background:#c9e1f7"></div>
<div class="hl" style="left:21px;top:363px;width:225px"></div>
<div class="hl" style="left:369px;top:363px;width:712px"></div>
<div class="hl" style="left:247px;top:363px;width:122px;background:#c9e1f7"></div>
<div class="hl" style="left:21px;top:419px;width:225px"></div>
<div class="hl" style="left:369px;top:419px;width:712px"></div>
<div class="hl" style="left:247px;top:419px;width:122px;background:#c9e1f7"></div>
<div class="hl" style="left:21px;top:475px;width:225px"></div>
<div class="hl" style="left:369px;top:475px;width:712px"></div>
<div class="hl" style="left:247px;top:475px;width:122px;background:#c9e1f7"></div>
<div class="hl" style="left:21px;top:531px;width:225px"></div>
<div class="hl" style="left:369px;top:531px;width:712px"></div>
<div class="hl" style="left:247px;top:531px;width:122px;background:#c9e1f7"></div>
<div class="hl" style="left:21px;top:587px;width:225px"></div>
<div class="hl" style="left:369px;top:587px;width:712px"></div>
<div class="hl" style="left:247px;top:587px;width:122px;background:#c9e1f7"></div>
<div class="hl" style="left:21px;top:606px;width:225px"></div>
<div class="hl" style="left:369px;top:606px;width:712px"></div>
<div class="hl" style="left:247px;top:606px;width:122px;background:#c9e1f7"></div>
<div class="hl" style="left:21px;top:625px;width:225px"></div>
<div class="hl" style="left:369px;top:625px;width:712px"></div>
<div class="hl" style="left:247px;top:625px;width:122px;background:#c9e1f7"></div>
<div class="hl" style="left:21px;top:644px;width:225px"></div>
<div class="hl" style="left:369px;top:644px;width:712px"></div>
<div class="hl" style="left:247px;top:644px;width:122px;background:#c9e1f7"></div>
<div class="hl" style="left:21px;top:663px;width:225px"></div>
<div class="hl" style="left:369px;top:663px;width:712px"></div>
<div class="hl" style="left:247px;top:663px;width:122px;background:#c9e1f7"></div>
<div class="hl" style="left:21px;top:682px;width:225px"></div>
<div class="hl" style="left:369px;top:682px;width:712px"></div>
<div class="hl" style="left:247px;top:682px;width:122px;background:#c9e1f7"></div>
<div class="hl" style="left:21px;top:701px;width:225px"></div>
<div class="hl" style="left:369px;top:701px;width:712px"></div>
<div class="hl" style="left:247px;top:701px;width:122px;background:#c9e1f7"></div>
<div class="hl" style="left:21px;top:720px;width:225px"></div>
<div class="hl" style="left:369px;top:720px;width:712px"></div>
<div class="hl" style="left:247px;top:720px;width:122px;background:#c9e1f7"></div>
<div class="hl" style="left:21px;top:739px;width:225px"></div>
<div class="hl" style="left:369px;top:739px;width:712px"></div>
<div class="hl" style="left:247px;top:739px;width:122px;background:#c9e1f7"></div>
<div class="hl" style="left:21px;top:758px;width:225px"></div>
<div class="hl" style="left:369px;top:758px;width:712px"></div>
<div class="hl" style="left:247px;top:758px;width:122px;background:#c9e1f7"></div>
<div class="hl" style="left:21px;top:777px;width:225px"></div>
<div class="hl" style="left:369px;top:777px;width:712px"></div>
<div class="hl" style="left:247px;top:777px;width:122px;background:#c9e1f7"></div>
<div class="hl" style="left:21px;top:796px;width:225px"></div>
<div class="hl" style="left:369px;top:796px;width:712px"></div>
<div class="hl" style="left:247px;top:796px;width:122px;background:#c9e1f7"></div>
<div class="hl" style="left:21px;top:815px;width:225px"></div>
<div class="hl" style="left:369px;top:815px;width:712px"></div>
<div class="hl" style="left:247px;top:815px;width:122px;background:#c9e1f7"></div>
<div class="hl" style="left:21px;top:834px;width:225px"></div>
<div class="hl" style="left:369px;top:834px;width:712px"></div>
<div class="hl" style="left:247px;top:834px;width:122px;background:#c9e1f7"></div>
<div class="vl" style="left:63px;top:251px;height:577px"></div>
<div class="vl" style="left:124px;top:251px;height:577px"></div>
<div class="vl" style="left:185px;top:251px;height:577px"></div>
<div class="vl" style="left:246px;top:251px;height:577px"></div>
<div class="vl" style="left:369px;top:251px;height:577px"></div>
<div class="vl" style="left:430px;top:251px;height:577px"></div>
<div class="vl" style="left:491px;top:251px;height:577px"></div>
<div class="vl" style="left:552px;top:251px;height:577px"></div>
<div class="vl" style="left:613px;top:251px;height:577px"></div>
<div class="vl" style="left:674px;top:251px;height:577px"></div>
<div class="vl" style="left:735px;top:251px;height:577px"></div>
<div class="vl" style="left:796px;top:251px;height:577px"></div>
<div class="vl" style="left:857px;top:251px;height:577px"></div>
<div class="vl" style="left:918px;top:251px;height:577px"></div>
<div class="vl" style="left:979px;top:251px;height:577px"></div>
<div class="vl" style="left:1040px;top:251px;height:577px"></div>
<div class="rh" style="top:251px;height:19px;padding-top:6px">1</div>
<div class="rh" style="top:270px;height:19px;padding-top:6px">2</div>
<div class="rh" style="top:289px;height:19px;padding-top:6px">3</div>
<div class="rh" style="top:308px;height:56px;padding-top:43px">4</div>
<div class="rh" style="top:364px;height:56px;padding-top:43px">5</div>
<div class="rh" style="top:420px;height:56px;padding-top:43px">6</div>
<div class="rh" style="top:476px;height:56px;padding-top:43px">7</div>
<div class="rh" style="top:532px;height:56px;padding-top:43px">8</div>
<div class="rh" style="top:588px;height:19px;padding-top:6px">9</div>
<div class="rh" style="top:607px;height:19px;padding-top:6px">10</div>
<div class="rh" style="top:626px;height:19px;padding-top:6px">11</div>
<div class="rh" style="top:645px;height:19px;padding-top:6px">12</div>
<div class="rh" style="top:664px;height:19px;padding-top:6px">13</div>
<div class="rh" style="top:683px;height:19px;padding-top:6px">14</div>
<div class="rh" style="top:702px;height:19px;padding-top:6px">15</div>
<div class="rh" style="top:721px;height:19px;padding-top:6px">16</div>
<div class="rh" style="top:740px;height:19px;padding-top:6px">17</div>
<div class="rh" style="top:759px;height:19px;padding-top:6px">18</div>
<div class="rh" style="top:778px;height:19px;padding-top:6px">19</div>
<div class="rh" style="top:797px;height:19px;padding-top:6px">20</div>
<div class="rh" style="top:816px;height:19px;padding-top:6px">21</div>
<div class="a" style="left:21px;top:289px;width:225px;height:18px;background:#00b0f0"></div>
<div class="a" style="left:20px;top:288px;width:227px;height:1px;background:#000"></div>
<div class="a" style="left:20px;top:307px;width:227px;height:1px;background:#000"></div>
<div class="a" style="left:20px;top:363px;width:227px;height:1px;background:#000"></div>
<div class="a" style="left:20px;top:419px;width:227px;height:1px;background:#000"></div>
<div class="a" style="left:20px;top:475px;width:227px;height:1px;background:#000"></div>
<div class="a" style="left:20px;top:531px;width:227px;height:1px;background:#000"></div>
<div class="a" style="left:20px;top:587px;width:227px;height:1px;background:#000"></div>
<div class="a" style="left:20px;top:288px;width:1px;height:300px;background:#000"></div>
<div class="a" style="left:63px;top:288px;width:1px;height:300px;background:#000"></div>
<div class="a" style="left:124px;top:288px;width:1px;height:300px;background:#000"></div>
<div class="a" style="left:185px;top:288px;width:1px;height:300px;background:#000"></div>
<div class="a" style="left:245px;top:288px;width:1px;height:300px;background:#000"></div>
<div class="a" style="left:245px;top:250px;width:3px;height:578px;background:#0d0d0d"></div>
<div class="a" style="left:246px;top:289px;width:1px;height:298px;background:#fff"></div>
<div class="a" style="left:368px;top:250px;width:3px;height:578px;background:#0d0d0d"></div>
<div class="a" style="left:245px;top:250px;width:126px;height:2px;background:#0d0d0d"></div>
<div class="a" style="left:366px;top:251px;width:6px;height:6px;background:#0d0d0d;border:1px solid #fff"></div>
<div class="a" style="left:21px;top:251px;width:100px;height:18px;background:#fff"></div>
<div class="cn" style="left:23px;top:254px;font-size:11px">项目合同款项追踪</div>
<div class="a" style="left:64px;top:289px;width:60px;height:18px;overflow:hidden"><div class="cn" style="left:0;top:3px;width:60px;text-align:center;color:#1b2b3a;font-size:11px">合同款项</div></div>
<div class="a" style="left:125px;top:289px;width:60px;height:18px;overflow:hidden"><div class="cn" style="left:0;top:3px;width:60px;text-align:center;color:#1b2b3a;font-size:11px">实际款项</div></div>
<div class="a" style="left:194px;top:289px;width:52px;height:18px;overflow:hidden"><div class="cn" style="left:0;top:3px;width:60px;text-align:center;color:#1b2b3a;font-size:11px">已收款项</div></div>
<div class="cn" style="left:23px;top:330px;font-size:11.5px">甲</div>
<div class="cn" style="left:64px;top:330px;width:58px;text-align:right;font-size:11px">292</div>
<div class="cn" style="left:125px;top:330px;width:58px;text-align:right;font-size:11px">596</div>
<div class="cn" style="left:186px;top:330px;width:58px;text-align:right;font-size:11px">957</div>
<div class="cn" style="left:23px;top:386px;font-size:11.5px">乙</div>
<div class="cn" style="left:64px;top:386px;width:58px;text-align:right;font-size:11px">275</div>
<div class="cn" style="left:125px;top:386px;width:58px;text-align:right;font-size:11px">589</div>
<div class="cn" style="left:186px;top:386px;width:58px;text-align:right;font-size:11px">295</div>
<div class="cn" style="left:23px;top:442px;font-size:11.5px">丙</div>
<div class="cn" style="left:64px;top:442px;width:58px;text-align:right;font-size:11px">579</div>
<div class="cn" style="left:125px;top:442px;width:58px;text-align:right;font-size:11px">446</div>
<div class="cn" style="left:186px;top:442px;width:58px;text-align:right;font-size:11px">223</div>
<div class="cn" style="left:23px;top:498px;font-size:11.5px">丁</div>
<div class="cn" style="left:64px;top:498px;width:58px;text-align:right;font-size:11px">732</div>
<div class="cn" style="left:125px;top:498px;width:58px;text-align:right;font-size:11px">806</div>
<div class="cn" style="left:186px;top:498px;width:58px;text-align:right;font-size:11px">641</div>
<div class="cn" style="left:23px;top:554px;font-size:11.5px">戊</div>
<div class="cn" style="left:64px;top:554px;width:58px;text-align:right;font-size:11px">275</div>
<div class="cn" style="left:125px;top:554px;width:58px;text-align:right;font-size:11px">891</div>
<div class="cn" style="left:186px;top:554px;width:58px;text-align:right;font-size:11px">332</div>
<div class="cn" style="left:249px;top:312px;color:#1d2739;font-size:11px">甲</div>
<div class="cn" style="left:249px;top:331px;color:#1d2739;font-size:11px">实际/合同差异：304</div>
<div class="cn" style="left:249px;top:350px;color:#1d2739;font-size:11px">已收/实际差异：361</div>
<div class="cn" style="left:249px;top:368px;color:#1d2739;font-size:11px">乙</div>
<div class="cn" style="left:249px;top:387px;color:#1d2739;font-size:11px">实际/合同差异：314</div>
<div class="cn" style="left:249px;top:406px;color:#1d2739;font-size:11px">已收/实际差异：-294</div>
<div class="cn" style="left:249px;top:424px;color:#1d2739;font-size:11px">丙</div>
<div class="cn" style="left:249px;top:443px;color:#1d2739;font-size:11px">实际/合同差异：-133</div>
<div class="cn" style="left:249px;top:462px;color:#1d2739;font-size:11px">已收/实际差异：-223</div>
<div class="cn" style="left:249px;top:480px;color:#1d2739;font-size:11px">丁</div>
<div class="cn" style="left:249px;top:499px;color:#1d2739;font-size:11px">实际/合同差异：74</div>
<div class="cn" style="left:249px;top:518px;color:#1d2739;font-size:11px">已收/实际差异：-165</div>
<div class="cn" style="left:249px;top:536px;color:#1d2739;font-size:11px">戊</div>
<div class="cn" style="left:249px;top:555px;color:#1d2739;font-size:11px">实际/合同差异：616</div>
<div class="cn" style="left:249px;top:574px;color:#1d2739;font-size:11px">已收/实际差异：-559</div>
<div class="a" style="left:363px;top:289px;width:686px;height:522px;background:#000"></div>
<div class="t" style="left:631px;top:328px;font-size:13.5px;color:#fff;font-weight:bold">项目合同款项追踪</div>
<div class="a" style="left:412px;top:403px;width:596px;height:310.79999999999995px;background:#c0c0c0"></div>
<div class="a" style="left:408px;top:713px;width:600px;height:1px;background:repeating-linear-gradient(90deg,#ababab 0 4px,transparent 4px 7px)"></div>
<div class="yl" style="left:361px;top:707px">0</div>
<div class="a" style="left:408px;top:662px;width:600px;height:1px;background:repeating-linear-gradient(90deg,#ababab 0 4px,transparent 4px 7px)"></div>
<div class="yl" style="left:361px;top:656px">200</div>
<div class="a" style="left:408px;top:610px;width:600px;height:1px;background:repeating-linear-gradient(90deg,#ababab 0 4px,transparent 4px 7px)"></div>
<div class="yl" style="left:361px;top:604px">400</div>
<div class="a" style="left:408px;top:558px;width:600px;height:1px;background:repeating-linear-gradient(90deg,#ababab 0 4px,transparent 4px 7px)"></div>
<div class="yl" style="left:361px;top:552px">600</div>
<div class="a" style="left:408px;top:506px;width:600px;height:1px;background:repeating-linear-gradient(90deg,#ababab 0 4px,transparent 4px 7px)"></div>
<div class="yl" style="left:361px;top:500px">800</div>
<div class="a" style="left:408px;top:454px;width:600px;height:1px;background:repeating-linear-gradient(90deg,#ababab 0 4px,transparent 4px 7px)"></div>
<div class="yl" style="left:361px;top:448px">1000</div>
<div class="a" style="left:408px;top:403px;width:600px;height:1px;background:repeating-linear-gradient(90deg,#ababab 0 4px,transparent 4px 7px)"></div>
<div class="yl" style="left:361px;top:397px">1200</div>
<div class="a" style="left:438px;top:422px;width:7px;height:7px;background:#5b9bd5"></div>
<div class="lg" style="left:448px">合同款项</div>
<div class="a" style="left:506px;top:422px;width:7px;height:7px;background:#ed7d31"></div>
<div class="lg" style="left:516px">实际款项</div>
<div class="a" style="left:576px;top:422px;width:7px;height:7px;background:#a5a5a5"></div>
<div class="lg" style="left:586px">已收款项</div>
<div class="a" style="left:432.5px;top:638.2px;width:26.67px;height:75.6px;background:#5b9bd5;box-shadow:2px 1px 3px rgba(0,0,0,.35)"></div>
<div class="a" style="left:459.2px;top:559.4px;width:26.67px;height:154.4px;background:#ed7d31;box-shadow:2px 1px 3px rgba(0,0,0,.35)"></div>
<div class="a" style="left:485.8px;top:465.9px;width:26.67px;height:247.9px;background:#a5a5a5;box-shadow:2px 1px 3px rgba(0,0,0,.35)"></div>
<div class="a" style="left:551.7px;top:642.6px;width:26.67px;height:71.2px;background:#5b9bd5;box-shadow:2px 1px 3px rgba(0,0,0,.35)"></div>
<div class="a" style="left:578.4px;top:561.2px;width:26.67px;height:152.6px;background:#ed7d31;box-shadow:2px 1px 3px rgba(0,0,0,.35)"></div>
<div class="a" style="left:605.0px;top:637.1px;width:26.67px;height:76.7px;background:#a5a5a5;box-shadow:2px 1px 3px rgba(0,0,0,.35)"></div>
<div class="a" style="left:670.9px;top:563.8px;width:26.67px;height:150.0px;background:#5b9bd5;box-shadow:2px 1px 3px rgba(0,0,0,.35)"></div>
<div class="a" style="left:697.6px;top:598.3px;width:26.67px;height:115.5px;background:#ed7d31;box-shadow:2px 1px 3px rgba(0,0,0,.35)"></div>
<div class="a" style="left:724.2px;top:656.0px;width:26.67px;height:57.8px;background:#a5a5a5;box-shadow:2px 1px 3px rgba(0,0,0,.35)"></div>
<div class="a" style="left:790.1px;top:524.2px;width:26.67px;height:189.6px;background:#5b9bd5;box-shadow:2px 1px 3px rgba(0,0,0,.35)"></div>
<div class="a" style="left:816.8px;top:505.0px;width:26.67px;height:208.8px;background:#ed7d31;box-shadow:2px 1px 3px rgba(0,0,0,.35)"></div>
<div class="a" style="left:843.4px;top:547.8px;width:26.67px;height:166.0px;background:#a5a5a5;box-shadow:2px 1px 3px rgba(0,0,0,.35)"></div>
<div class="a" style="left:909.3px;top:642.6px;width:26.67px;height:71.2px;background:#5b9bd5;box-shadow:2px 1px 3px rgba(0,0,0,.35)"></div>
<div class="a" style="left:936.0px;top:483.0px;width:26.67px;height:230.8px;background:#ed7d31;box-shadow:2px 1px 3px rgba(0,0,0,.35)"></div>
<div class="a" style="left:962.6px;top:627.8px;width:26.67px;height:86.0px;background:#a5a5a5;box-shadow:2px 1px 3px rgba(0,0,0,.35)"></div>
<div class="a" style="left:412px;top:713px;width:1px;height:4px;background:#888"></div>
<div class="a" style="left:531px;top:713px;width:1px;height:4px;background:#888"></div>
<div class="a" style="left:650px;top:713px;width:1px;height:4px;background:#888"></div>
<div class="a" style="left:770px;top:713px;width:1px;height:4px;background:#888"></div>
<div class="a" style="left:889px;top:713px;width:1px;height:4px;background:#888"></div>
<div class="a" style="left:1008px;top:713px;width:1px;height:4px;background:#888"></div>
<div class="a" style="left:412px;top:713px;width:596px;height:1px;background:#888"></div>
<div class="xl" style="left:412.0px;top:726px">甲</div>
<div class="xl" style="left:412.0px;top:746px">实际/合同差异：304</div>
<div class="xl" style="left:412.0px;top:765px">已收/实际差异：361</div>
<div class="xl" style="left:531.2px;top:726px">乙</div>
<div class="xl" style="left:531.2px;top:746px">实际/合同差异：314</div>
<div class="xl" style="left:531.2px;top:765px">已收/实际差异：-294</div>
<div class="xl" style="left:650.4px;top:726px">丙</div>
<div class="xl" style="left:650.4px;top:746px">实际/合同差异：-133</div>
<div class="xl" style="left:650.4px;top:765px">已收/实际差异：-223</div>
<div class="xl" style="left:769.6px;top:726px">丁</div>
<div class="xl" style="left:769.6px;top:746px">实际/合同差异：74</div>
<div class="xl" style="left:769.6px;top:765px">已收/实际差异：-165</div>
<div class="xl" style="left:888.8px;top:726px">戊</div>
<div class="xl" style="left:888.8px;top:746px">实际/合同差异：616</div>
<div class="xl" style="left:888.8px;top:765px">已收/实际差异：-559</div>
<div class="a" style="left:238px;top:292px;width:129px;height:306px;border:2.5px solid #d5262e"></div>
<div class="a" style="left:408px;top:713.5px;width:618px;height:84px;border:2.3px solid #d9262e"></div>
<svg style="left:0;top:0" width="1081" height="828" viewBox="0 0 1081 828"><path d="M378.5 299.5L526 76" stroke="#dc2a34" stroke-width="2"/><path d="M534.5 63.5L519 72.5L532 80z" fill="#e3212e"/></svg>
<div class="t" style="left:801px;top:784px;font-size:30px;letter-spacing:3px;color:#e4e4e4;font-weight:300;text-shadow:1px 1px 1px #2a2a2a,2px 2px 2px rgba(0,0,0,.45)">头条号</div>
<div class="t" style="left:906px;top:784px;font-size:30px;color:#e4e4e4;font-weight:300;text-shadow:1px 1px 1px #2a2a2a,2px 2px 2px rgba(0,0,0,.45)">/</div>
<div class="t" style="left:924px;top:784px;font-size:30px;letter-spacing:1px;color:#e4e4e4;font-weight:300;text-shadow:1px 1px 1px #2a2a2a,2px 2px 2px rgba(0,0,0,.45)">天天</div>
<div class="t" style="left:985px;top:785px;font-size:31px;letter-spacing:-0.5px;color:#e4e4e4;font-weight:300;text-shadow:1px 1px 1px #2a2a2a,2px 2px 2px rgba(0,0,0,.45)">Exce</div>
<div class="a" style="left:1056px;top:791px;width:2px;height:22px;background:#d8d8d8;box-shadow:1px 1px 1px #333"></div>
</body></html>
